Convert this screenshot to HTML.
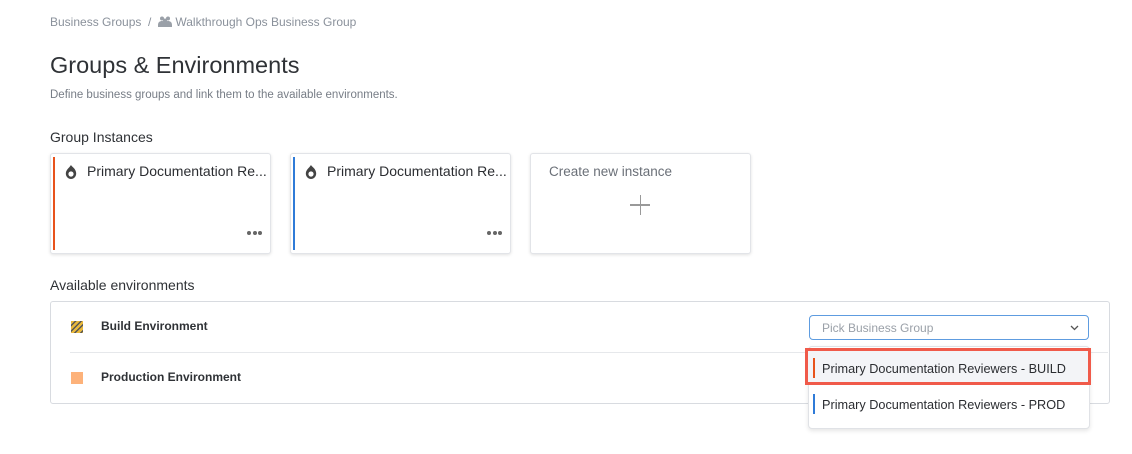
<!DOCTYPE html>
<html><head><style>
body{margin:0;width:1132px;height:454px;background:#fff;font-family:"Liberation Sans",sans-serif;position:relative;overflow:hidden;color:#333}
.a{position:absolute}
.card{position:absolute;top:153px;width:219px;height:99px;border:1px solid #e2e4e8;border-radius:3px;box-shadow:0 1px 3px rgba(0,0,0,.12);background:#fff}
.bar{position:absolute;left:2px;top:3px;bottom:3px;width:2px}
.ct{position:absolute;left:36px;top:9px;font-size:14px;color:#2b2d31;white-space:nowrap}
.dots{position:absolute;right:8px;bottom:13px}
.dots i{display:inline-block;width:4px;height:4px;border-radius:50%;background:#666;margin-left:1.5px}
</style></head><body>
<div class="a" style="left:50px;top:15px;font-size:12px;color:#8a919b">Business Groups &nbsp;/ &nbsp;<svg width="14" height="11" viewBox="0 0 14 11" style="vertical-align:-1px"><circle cx="4" cy="2.5" r="2" fill="#9aa0a8"/><circle cx="10" cy="2.5" r="2" fill="#9aa0a8"/><circle cx="7" cy="4.5" r="2" fill="#9aa0a8"/><path d="M0 9c0-3 2-4 4-4s3 1 3 1 1-1 3-1 4 1 4 4v2H0z" fill="#9aa0a8"/></svg> Walkthrough Ops Business Group</div>
<div class="a" style="left:50px;top:52px;font-size:23.5px;color:#2f3236">Groups &amp; Environments</div>
<div class="a" style="left:50px;top:89px;font-size:11.5px;color:#777d86">Define business groups and link them to the available environments.</div>
<div class="a" style="left:50px;top:129px;font-size:14px;color:#2f3236">Group Instances</div>
<div class="card" style="left:50px"><div class="bar" style="background:#e8531c"></div>
<svg class="a" style="left:14px;top:11px" width="12" height="14" viewBox="0 0 12 14"><path d="M6 0C7 2 10 3 11 7c1 4-2 7-5 7S0 11 1 7C2 4 4 3 6 0z" fill="#444"/><circle cx="6" cy="9" r="2.6" fill="#fff"/></svg>
<div class="ct">Primary Documentation Re...</div><div class="dots"><i></i><i></i><i></i></div></div>
<div class="card" style="left:290px"><div class="bar" style="background:#2f7bd8"></div>
<svg class="a" style="left:14px;top:11px" width="12" height="14" viewBox="0 0 12 14"><path d="M6 0C7 2 10 3 11 7c1 4-2 7-5 7S0 11 1 7C2 4 4 3 6 0z" fill="#444"/><circle cx="6" cy="9" r="2.6" fill="#fff"/></svg>
<div class="ct">Primary Documentation Re...</div><div class="dots"><i></i><i></i><i></i></div></div>
<div class="card" style="left:530px"><div class="a" style="left:18px;top:10px;font-size:13.5px;color:#6b7078">Create new instance</div>
<div class="a" style="left:99px;top:50px;width:20px;height:1.5px;background:#999"></div><div class="a" style="left:108.5px;top:41px;width:1.5px;height:20px;background:#999"></div></div>
<div class="a" style="left:50px;top:277px;font-size:14px;color:#2f3236">Available environments</div>
<div class="a" style="left:50px;top:301px;width:1058px;height:101px;border:1px solid #d8dbe0;border-radius:3px"></div>
<div class="a" style="left:71px;top:321px;width:12px;height:12px;background:repeating-linear-gradient(135deg,#e8b83c 0 2.5px,#555 2.5px 4px)"></div>
<div class="a" style="left:101px;top:319px;font-size:12px;font-weight:bold;color:#2f3236">Build Environment</div>
<div class="a" style="left:70px;top:352px;width:1038px;height:1px;background:#e6e8eb"></div>
<div class="a" style="left:71px;top:372px;width:12px;height:12px;background:#fdb27a"></div>
<div class="a" style="left:101px;top:370px;font-size:12px;font-weight:bold;color:#2f3236">Production Environment</div>
<div class="a" style="left:809px;top:315px;width:278px;height:23px;border:1px solid #5e9ce0;border-radius:4px;background:#fff"><span class="a" style="left:12px;top:5px;font-size:12px;color:#9aa0a8">Pick Business Group</span>
<svg class="a" style="left:260px;top:9px" width="9" height="6"><path d="M1 1l3.5 3.5L8 1" stroke="#555" fill="none" stroke-width="1.3"/></svg></div>
<div class="a" style="left:808px;top:346px;width:280px;height:81px;background:#fff;border:1px solid #e0e2e6;border-radius:4px;box-shadow:0 2px 4px rgba(0,0,0,.1)"></div>
<div class="a" style="left:805px;top:348px;width:286px;height:37px;background:#f3f4f7;border:3px solid #f05a4a;box-sizing:border-box"></div>
<div class="a" style="left:813px;top:358px;width:2px;height:20px;background:#e8531c"></div>
<div class="a" style="left:822px;top:362px;font-size:12.7px;color:#2b2d31">Primary Documentation Reviewers - BUILD</div>
<div class="a" style="left:813px;top:394px;width:2px;height:20px;background:#2f7bd8"></div>
<div class="a" style="left:822px;top:398px;font-size:12.7px;color:#2b2d31">Primary Documentation Reviewers - PROD</div>
</body></html>
